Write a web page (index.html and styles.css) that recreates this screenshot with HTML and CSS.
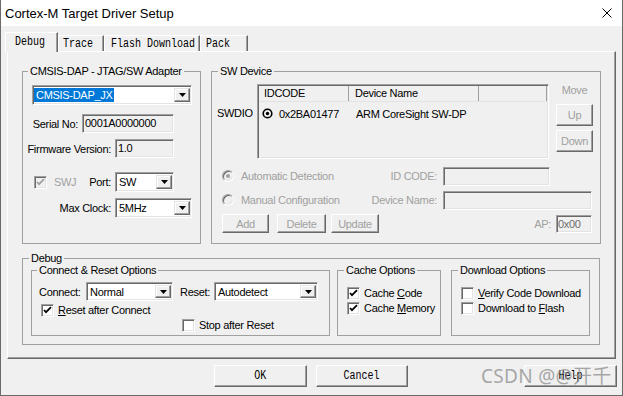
FILE: index.html
```html
<!DOCTYPE html>
<html>
<head>
<meta charset="utf-8">
<link rel="stylesheet" href="styles.css">
</head>
<body>
<div class="window">
  <div class="titlebar">
    <span class="title">Cortex-M Target Driver Setup</span>
    <svg class="close" width="10" height="10" viewBox="0 0 10 10"><path d="M0.5 0.5L9.5 9.5M9.5 0.5L0.5 9.5" stroke="#000" stroke-width="1" fill="none"/></svg>
  </div>
  <div class="tabs">
    <div class="tab active t-debug"><span class="mono">Debug</span></div>
    <div class="tab t-trace"><span class="mono">Trace</span></div>
    <div class="tab t-flash"><span class="mono">Flash Download</span></div>
    <div class="tab t-pack"><span class="mono">Pack</span></div>
  </div>
  <div class="page">
    <div class="top-row">
      <fieldset class="grp adapter">
        <legend class="lg5">CMSIS-DAP - JTAG/SW Adapter</legend>
        <div class="combo adapter-combo">
          <span class="cval"><span class="sel">CMSIS-DAP_JX</span></span>
          <span class="cbtn"><svg width="7" height="4" viewBox="0 0 7 4"><path d="M0 0H7L3.5 4Z" fill="#000"/></svg></span>
        </div>
        <div class="row serial-row">
          <span class="lbl lbl-serial">Serial No:</span>
          <div class="edit ro w92">0001A0000000</div>
        </div>
        <div class="row fw-row">
          <span class="lbl lbl-wide">Firmware Version:</span>
          <div class="edit ro w59">1.0</div>
        </div>
        <div class="row port-row">
          <span class="chk dis swj"><svg width="13" height="13" viewBox="0 0 13 13"><path d="M3 6L5 8.2L10 3.2" stroke="#a0a0a0" stroke-width="1.8" fill="none"/></svg></span>
          <span class="dis-text swj-text">SWJ</span>
          <span class="lbl grow">Port:</span>
          <div class="combo w59 port-combo">
            <span class="cval">SW</span>
            <span class="cbtn"><svg width="7" height="4" viewBox="0 0 7 4"><path d="M0 0H7L3.5 4Z" fill="#000"/></svg></span>
          </div>
        </div>
        <div class="row clk-row">
          <span class="lbl lbl-wide">Max Clock:</span>
          <div class="combo w77">
            <span class="cval">5MHz</span>
            <span class="cbtn"><svg width="7" height="4" viewBox="0 0 7 4"><path d="M0 0H7L3.5 4Z" fill="#000"/></svg></span>
          </div>
        </div>
      </fieldset>

      <fieldset class="grp swdev">
        <legend>SW Device</legend>
        <div class="sw-top">
          <div class="swdio">SWDIO</div>
          <div class="list">
            <div class="lhead">
              <div class="hc hc1">IDCODE</div>
              <div class="hc hc2">Device Name</div>
              <div class="hc hc3"></div>
            </div>
            <div class="lrow">
              <svg class="rsel" width="11" height="11" viewBox="0 0 11 11"><circle cx="5.5" cy="5.5" r="4.3" fill="none" stroke="#000" stroke-width="1.6"/><circle cx="5.5" cy="5.5" r="1.7" fill="#000"/></svg>
              <span class="lc1">0x2BA01477</span>
              <span class="lc2">ARM CoreSight SW-DP</span>
            </div>
          </div>
          <div class="move">
            <div class="move-lbl">Move</div>
            <div class="btn dis-btn up">Up</div>
            <div class="btn dis-btn down">Down</div>
          </div>
        </div>
        <div class="sw-row r-auto">
          <span class="radio dis on"></span>
          <span class="dis-text radio-text">Automatic Detection</span>
          <span class="dis-text flabel">ID CODE:</span>
          <div class="edit ro w107 mr50"></div>
        </div>
        <div class="sw-row r-manual">
          <span class="radio dis"></span>
          <span class="dis-text radio-text">Manual Configuration</span>
          <span class="dis-text flabel">Device Name:</span>
          <div class="edit ro w149 mr8"></div>
        </div>
        <div class="sw-row r-btns">
          <div class="btn dis-btn b-add">Add</div>
          <div class="btn dis-btn b-del">Delete</div>
          <div class="btn dis-btn b-upd">Update</div>
          <span class="dis-text flabel ap">AP:</span>
          <div class="edit ro ap-edit">0x00</div>
        </div>
      </fieldset>
    </div>

    <fieldset class="grp debug">
      <legend>Debug</legend>
      <div class="debug-row">
        <fieldset class="grp conn">
          <legend class="lg5">Connect &amp; Reset Options</legend>
          <div class="conn-row">
            <span class="lbl-c">Connect:</span>
            <div class="combo w87">
              <span class="cval">Normal</span>
              <span class="cbtn"><svg width="7" height="4" viewBox="0 0 7 4"><path d="M0 0H7L3.5 4Z" fill="#000"/></svg></span>
            </div>
            <span class="lbl-r">Reset:</span>
            <div class="combo w104">
              <span class="cval">Autodetect</span>
              <span class="cbtn"><svg width="7" height="4" viewBox="0 0 7 4"><path d="M0 0H7L3.5 4Z" fill="#000"/></svg></span>
            </div>
          </div>
          <div class="cb-row rac">
            <span class="chk"><svg width="13" height="13" viewBox="0 0 13 13"><path d="M3 6L5 8.2L10 3.2" stroke="#000" stroke-width="1.8" fill="none"/></svg></span>
            <span class="cb-text"><u>R</u>eset after Connect</span>
          </div>
          <div class="cb-row sar">
            <span class="chk"></span>
            <span class="cb-text">Stop after Reset</span>
          </div>
        </fieldset>
        <fieldset class="grp cache">
          <legend>Cache Options</legend>
          <div class="cb-row first">
            <span class="chk"><svg width="13" height="13" viewBox="0 0 13 13"><path d="M3 6L5 8.2L10 3.2" stroke="#000" stroke-width="1.8" fill="none"/></svg></span>
            <span class="cb-text">Cache <u>C</u>ode</span>
          </div>
          <div class="cb-row second">
            <span class="chk"><svg width="13" height="13" viewBox="0 0 13 13"><path d="M3 6L5 8.2L10 3.2" stroke="#000" stroke-width="1.8" fill="none"/></svg></span>
            <span class="cb-text">Cache <u>M</u>emory</span>
          </div>
        </fieldset>
        <fieldset class="grp dl">
          <legend>Download Options</legend>
          <div class="cb-row first">
            <span class="chk"></span>
            <span class="cb-text"><u>V</u>erify Code Download</span>
          </div>
          <div class="cb-row second">
            <span class="chk"></span>
            <span class="cb-text">Download to <u>F</u>lash</span>
          </div>
        </fieldset>
      </div>
    </fieldset>
  </div>
  <div class="buttons">
    <div class="btn big ok"><span class="mono">OK</span></div>
    <div class="btn big cancel"><span class="mono">Cancel</span></div>
    <div class="btn big help"><span class="mono">Help</span></div>
  </div>
  <div class="watermark">CSDN @@开千</div>
</div>
</body>
</html>
```
FILE: styles.css
```css
* { box-sizing: border-box; }
html, body { margin: 0; padding: 0; }
body {
  background: #f0f0f0;
  font-family: "Liberation Sans", Arial, sans-serif;
  font-size: 11px;
  letter-spacing: -0.3px;
  color: #000;
}
.window {
  position: relative;
  width: 623px;
  height: 396px;
  border: 1px solid #6b6b6b;
  border-top: none;
  background: #f0f0f0;
  overflow: hidden;
}
.titlebar {
  height: 26px;
  background: #fff;
  display: flex;
  align-items: center;
  justify-content: space-between;
  padding: 0 10px 0 4px;
}
.title {
  font-family: "Liberation Sans", Arial, sans-serif;
  font-size: 13px;
  letter-spacing: 0;
}
.close { display: block; }

.mono {
  display: inline-block;
  font-family: "Liberation Mono", monospace;
  font-size: 12px;
  letter-spacing: 0;
  transform: scaleX(0.833);
  transform-origin: left center;
}

/* tabs */
.tabs {
  height: 25px;
  display: flex;
  align-items: flex-end;
  padding-left: 4px;
}
.tab {
  height: 16px;
  border-top: 1px solid #fff;
  border-left: 1px solid #fff;
  border-right: 1px solid #696969;
  box-shadow: inset -1px 0 0 #a0a0a0;
  line-height: 14px;
  white-space: nowrap;
  background: #f0f0f0;
}
.tab.active {
  height: 20px;
  margin-bottom: -1px;
  position: relative;
  z-index: 1;
  line-height: 16px;
}
.t-debug { width: 53px; padding-left: 9px; }
.t-trace { width: 46px; padding-left: 4px; }
.t-flash { width: 96px; padding-left: 6px; }
.t-pack { width: 48px; padding-left: 5px; }

.page {
  margin-left: 6px;
  width: 609px;
  height: 308px;
  border: 1px solid;
  border-color: #fff #696969 #696969 #fff;
  box-shadow: inset -1px -1px 0 #a0a0a0;
  padding: 13px 0 0 14px;
}

/* group boxes */
.grp {
  margin: 0;
  padding: 0;
  min-width: 0;
  border: 1px solid #a0a0a0;
}
.grp > legend {
  margin-left: 6px;
  padding: 0 2px;
  line-height: 12px;
  height: 12px;
}
.grp > legend.lg5 { margin-left: 5px; }

.top-row { display: flex; gap: 10px; }
.adapter { width: 179px; height: 179px; }
.swdev { width: 390px; height: 179px; }

/* controls */
.combo {
  display: flex;
  height: 20px;
  background: #fff;
  border: 1px solid;
  border-color: #a0a0a0 #fff #fff #a0a0a0;
  box-shadow: inset 1px 1px 0 #696969, inset -1px -1px 0 #e3e3e3;
  padding: 1px;
}
.cval {
  flex: 1;
  display: flex;
  align-items: center;
  padding-left: 2px;
  white-space: nowrap;
  overflow: hidden;
}
.sel {
  margin-left: -2px;
  padding: 0 2px;
  height: 14px;
  line-height: 14px;
  background: #0078d7;
  color: #fff;
}
.cbtn {
  width: 16px;
  margin: 1px 0;
  border: 1px solid;
  border-color: #e3e3e3 #696969 #696969 #e3e3e3;
  box-shadow: inset -1px -1px 0 #a0a0a0, inset 1px 1px 0 #fff;
  background: #f0f0f0;
  display: flex;
  align-items: center;
  justify-content: center;
}
.cbtn svg { display: block; }

.edit {
  height: 19px;
  border: 1px solid;
  border-color: #a0a0a0 #fff #fff #a0a0a0;
  box-shadow: inset 1px 1px 0 #696969, inset -1px -1px 0 #e3e3e3;
  background: #fff;
  padding-left: 2px;
  line-height: 17px;
  white-space: nowrap;
}
.edit.ro { background: #f0f0f0; }

.w59 { width: 59px; }
.w77 { width: 77px; }
.w87 { width: 87px; }
.w92 { width: 92px; }
.w104 { width: 104px; }
.w107 { width: 107px; }
.w149 { width: 149px; }
.mr50 { margin-right: 50px; }
.mr8 { margin-right: 8px; }

.adapter-combo { width: 160px; margin: 8px 0 0 9px; }
.row { display: flex; align-items: center; }
.lbl { text-align: right; padding-right: 4px; white-space: nowrap; }
.lbl-serial { width: 59px; }
.lbl-wide { width: 92px; }
.grow { flex: 1; }
.serial-row { margin-top: 9px; height: 19px; }
.fw-row { margin-top: 6px; height: 19px; }
.port-row { margin-top: 14px; height: 20px; }
.port-combo { margin-right: 26px; }
.clk-row { margin-top: 6px; height: 20px; }
.swj { margin-left: 11px; }
.swj-text { margin-left: 7px; }

.dis-text { color: #a0a0a0; white-space: nowrap; }

.chk {
  flex: none;
  width: 13px;
  height: 13px;
  border: 1px solid;
  border-color: #a0a0a0 #fff #fff #a0a0a0;
  box-shadow: inset 1px 1px 0 #696969, inset -1px -1px 0 #e3e3e3;
  background: #fff;
  position: relative;
}
.chk svg { position: absolute; left: -1px; top: -1px; }
.chk.dis { background: #f0f0f0; }

.radio {
  flex: none;
  width: 12px;
  height: 12px;
  border-radius: 50%;
  border: 1px solid;
  border-color: #a0a0a0 #fff #fff #a0a0a0;
  box-shadow: inset 1px 1px 0 #696969, inset -1px -1px 0 #e3e3e3;
  background: #fff;
  display: flex;
  align-items: center;
  justify-content: center;
}
.radio.dis { background: #f0f0f0; }
.radio.on::after {
  content: "";
  width: 4px;
  height: 4px;
  border-radius: 50%;
  background: #a0a0a0;
}

/* SW device */
.sw-top { display: flex; margin-top: 7px; height: 75px; }
.swdio { width: 45px; padding: 23px 0 0 5px; line-height: 13px; }
.list {
  width: 292px;
  height: 75px;
  border: 1px solid;
  border-color: #a0a0a0 #fff #fff #a0a0a0;
  box-shadow: inset 1px 1px 0 #696969, inset -1px -1px 0 #e3e3e3;
  padding: 1px;
  background: #f0f0f0;
}
.lhead { display: flex; height: 16px; border-bottom: 1px solid #e3e3e3; }
.hc { border-right: 1px solid #a0a0a0; line-height: 15px; white-space: nowrap; }
.hc1 { width: 90px; padding-left: 5px; }
.hc2 { width: 130px; padding-left: 6px; }
.hc3 { flex: 1; }
.lrow { display: flex; align-items: center; height: 17px; margin-top: 3px; white-space: nowrap; }
.rsel { margin-left: 3px; flex: none; }
.lc1 { margin-left: 6px; width: 77px; }
.move { margin-left: 7px; width: 37px; }
.move-lbl { text-align: center; line-height: 13px; color: #a0a0a0; }

.btn {
  display: flex;
  align-items: center;
  justify-content: center;
  border: 1px solid;
  border-color: #fff #696969 #696969 #fff;
  box-shadow: inset -1px -1px 0 #a0a0a0;
  background: #f0f0f0;
  white-space: nowrap;
}
.dis-btn { color: #a0a0a0; }
.up { height: 22px; margin-top: 7px; }
.down { height: 22px; margin-top: 4px; }

.sw-row { display: flex; align-items: center; }
.r-auto { margin-top: 7px; height: 20px; }
.r-manual { margin-top: 4px; height: 20px; }
.r-btns { margin-top: 4px; height: 19px; }
.sw-row .radio { margin-left: 10px; }
.radio-text { margin-left: 7px; }
.flabel { flex: 1; text-align: right; padding-right: 6px; }
.flabel.ap { padding-right: 5px; }
.b-add { width: 47px; height: 19px; margin-left: 10px; }
.b-del { width: 49px; height: 19px; margin-left: 8px; }
.b-upd { width: 48px; height: 19px; margin-left: 5px; }
.ap-edit { width: 36px; height: 18px; line-height: 16px; margin-right: 8px; color: #6d6d6d; padding-left: 1px; }

/* debug */
.grp.debug { width: 578px; height: 93px; margin-top: 8px; }
.debug-row { display: flex; padding-left: 8px; }
.grp.conn { width: 299px; height: 72px; }
.grp.cache { width: 104px; height: 72px; margin-left: 7px; }
.grp.dl { width: 139px; height: 72px; margin-left: 10px; }
.conn-row { display: flex; align-items: center; margin-top: 6px; height: 19px; }
.conn-row .combo { height: 19px; }
.lbl-c { width: 54px; padding-left: 7px; white-space: nowrap; }
.lbl-r { width: 34px; margin-left: 7px; white-space: nowrap; }
.cb-row { display: flex; align-items: center; height: 13px; }
.cb-text { margin-left: 4px; white-space: nowrap; line-height: 13px; }
.rac { margin-top: 3px; padding-left: 9px; }
.sar { margin-top: 2px; padding-left: 150px; }
.cache .first, .dl .first { margin-top: 11px; padding-left: 9px; }
.cache .second, .dl .second { margin-top: 2px; padding-left: 9px; }

/* bottom buttons */
.buttons { display: flex; margin-top: 6px; height: 22px; }
.big { height: 22px; }
.big .mono { transform-origin: center; }
.ok { width: 93px; margin-left: 213px; }
.cancel { width: 92px; margin-left: 9px; }
.help { width: 93px; margin-left: 116px; }

.watermark {
  position: absolute;
  left: 480px;
  top: 361px;
  font-family: "Noto Sans", "Noto Sans CJK SC", sans-serif;
  font-size: 19px;
  letter-spacing: 0.3px;
  color: rgba(140, 140, 140, 0.75);
  white-space: nowrap;
  pointer-events: none;
}
```
